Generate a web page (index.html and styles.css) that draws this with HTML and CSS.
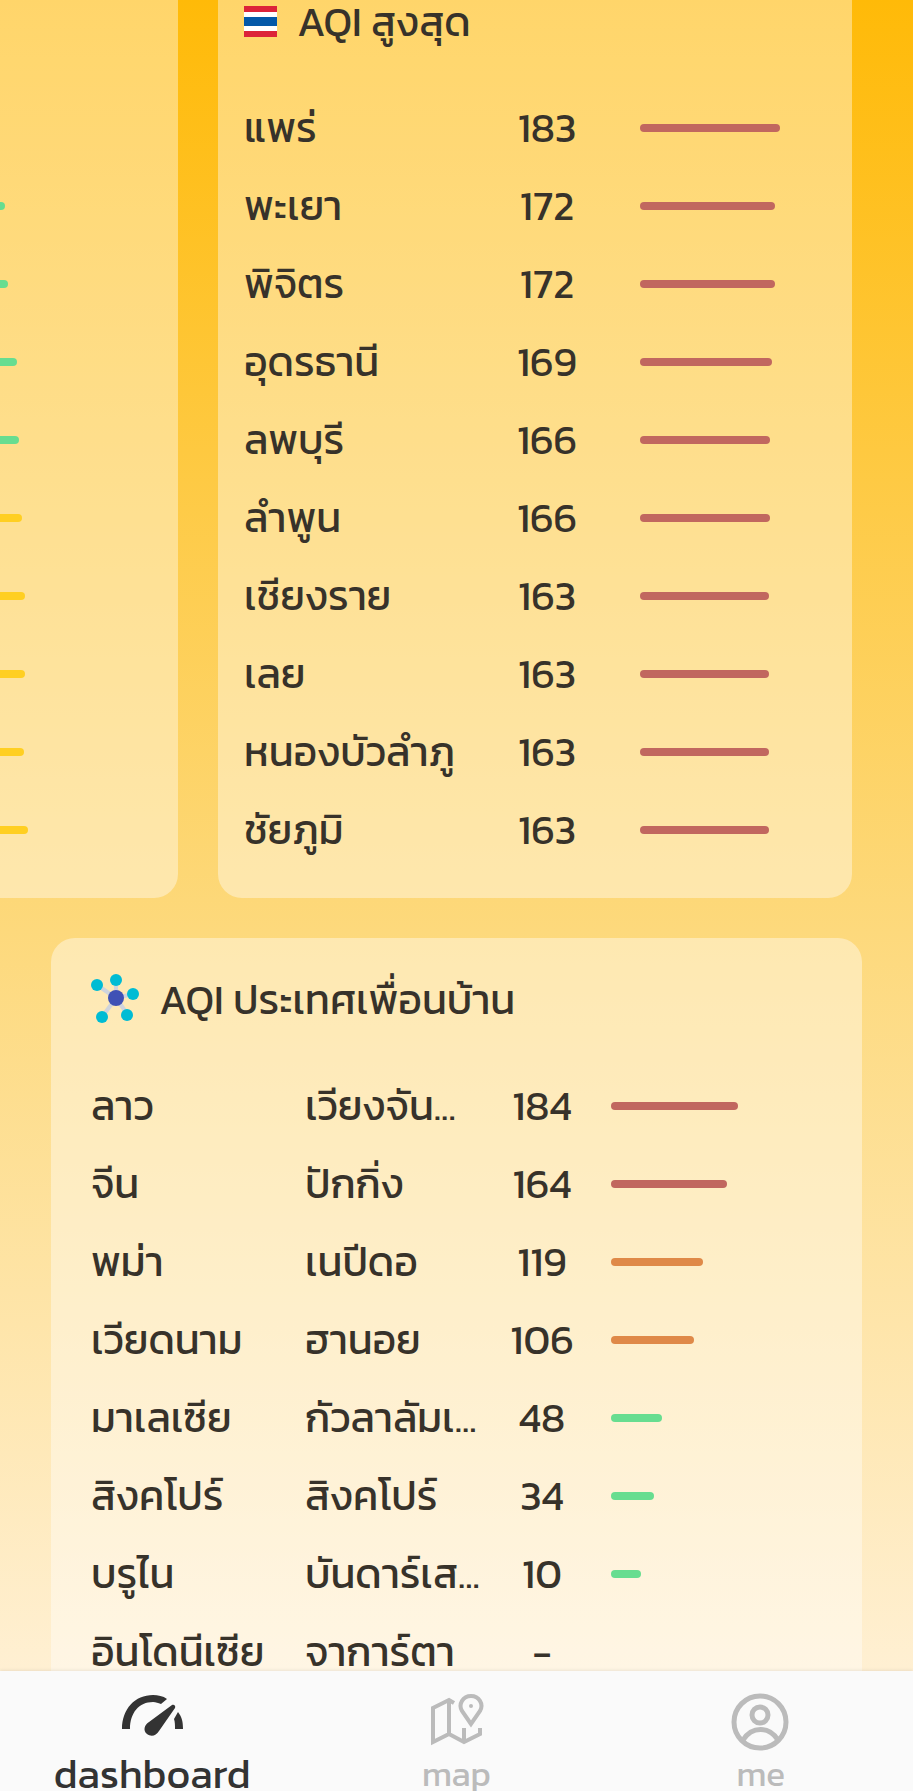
FILE: index.html
```
<!DOCTYPE html>
<html lang="th">
<head>
    <meta charset="UTF-8">
    <meta name="viewport" content="width=device-width, initial-scale=1.0">
    <title>AQI Dashboard</title>
    <link rel="stylesheet" href="styles.css">
</head>
<body>
    <main class="content">
        <div class="carousel">
            <section class="card">
                <ul class="bar-list">
                    <li><span class="bar green" style="width: 30px"></span></li>
                    <li><span class="bar green" style="width: 39px"></span></li>
                    <li><span class="bar green" style="width: 42px"></span></li>
                    <li><span class="bar green" style="width: 51px"></span></li>
                    <li><span class="bar green" style="width: 53px"></span></li>
                    <li><span class="bar yellow" style="width: 56px"></span></li>
                    <li><span class="bar yellow" style="width: 59px"></span></li>
                    <li><span class="bar yellow" style="width: 59px"></span></li>
                    <li><span class="bar yellow" style="width: 58px"></span></li>
                    <li><span class="bar yellow" style="width: 62px"></span></li>
                </ul>
            </section>

            <section class="card">
                <h2>
                    <svg class="flag" viewBox="0 0 33 31">
                        <rect width="33" height="31" fill="#fff"/>
                        <rect width="33" height="6" fill="#dc2339"/>
                        <rect y="11" width="33" height="9" fill="#0458a8"/>
                        <rect y="25" width="33" height="6" fill="#dc2339"/>
                    </svg>
                    AQI สูงสุด
                </h2>
                <table>
                    <tr><td class="province">แพร่</td><td class="aqi">183</td><td><span class="bar red" style="width: 140px"></span></td></tr>
                    <tr><td class="province">พะเยา</td><td class="aqi">172</td><td><span class="bar red" style="width: 135px"></span></td></tr>
                    <tr><td class="province">พิจิตร</td><td class="aqi">172</td><td><span class="bar red" style="width: 135px"></span></td></tr>
                    <tr><td class="province">อุดรธานี</td><td class="aqi">169</td><td><span class="bar red" style="width: 132px"></span></td></tr>
                    <tr><td class="province">ลพบุรี</td><td class="aqi">166</td><td><span class="bar red" style="width: 130px"></span></td></tr>
                    <tr><td class="province">ลำพูน</td><td class="aqi">166</td><td><span class="bar red" style="width: 130px"></span></td></tr>
                    <tr><td class="province">เชียงราย</td><td class="aqi">163</td><td><span class="bar red" style="width: 129px"></span></td></tr>
                    <tr><td class="province">เลย</td><td class="aqi">163</td><td><span class="bar red" style="width: 129px"></span></td></tr>
                    <tr><td class="province">หนองบัวลำภู</td><td class="aqi">163</td><td><span class="bar red" style="width: 129px"></span></td></tr>
                    <tr><td class="province">ชัยภูมิ</td><td class="aqi">163</td><td><span class="bar red" style="width: 129px"></span></td></tr>
                </table>
            </section>
        </div>

        <section class="card neighbors">
            <h2>
                <svg class="network" viewBox="0 1 48 50">
                    <path d="M25 25 6 12M25 25V7M25 25l17-4M25 25l12 17M25 25 11 44" stroke="#cfd4dc" stroke-width="4"/>
                    <circle cx="25" cy="25" r="8" fill="#3f51b5"/>
                    <g fill="#00bcd4">
                        <circle cx="6" cy="12" r="6"/>
                        <circle cx="25" cy="7" r="6"/>
                        <circle cx="42" cy="21" r="6"/>
                        <circle cx="36" cy="42" r="6"/>
                        <circle cx="11" cy="44" r="6"/>
                    </g>
                </svg>
                AQI ประเทศเพื่อนบ้าน
            </h2>
            <table>
                <tr><td class="country">ลาว</td><td class="city">เวียงจัน...</td><td class="aqi">184</td><td><span class="bar red" style="width: 127px"></span></td></tr>
                <tr><td class="country">จีน</td><td class="city">ปักกิ่ง</td><td class="aqi">164</td><td><span class="bar red" style="width: 116px"></span></td></tr>
                <tr><td class="country">พม่า</td><td class="city">เนปีดอ</td><td class="aqi">119</td><td><span class="bar orange" style="width: 92px"></span></td></tr>
                <tr><td class="country">เวียดนาม</td><td class="city">ฮานอย</td><td class="aqi">106</td><td><span class="bar orange" style="width: 83px"></span></td></tr>
                <tr><td class="country">มาเลเซีย</td><td class="city">กัวลาลัมเ...</td><td class="aqi">48</td><td><span class="bar green" style="width: 51px"></span></td></tr>
                <tr><td class="country">สิงคโปร์</td><td class="city">สิงคโปร์</td><td class="aqi">34</td><td><span class="bar green" style="width: 43px"></span></td></tr>
                <tr><td class="country">บรูไน</td><td class="city">บันดาร์เส...</td><td class="aqi">10</td><td><span class="bar green" style="width: 30px"></span></td></tr>
                <tr><td class="country">อินโดนีเซีย</td><td class="city">จาการ์ตา</td><td class="aqi">-</td><td></td></tr>
            </table>
        </section>
    </main>

    <nav class="bottom-nav">
        <a href="#dashboard" class="active">
            <svg viewBox="0 0 57 57">
                <path d="M-2 36C-2 16 11 2 29 2c5 0 10 1 14 4l-6 5c-3-1-5-2-8-2C15 9 6 20 6 36z"/>
                <path d="M51 15 35 38c-3 5-8 6-12 3s-3-9 2-12l23-17c2-1 4 1 3 3z"/>
                <path d="m54 19-4 7c1 3 1 6 1 10h8c0-7-1-12-5-17z"/>
            </svg>
            <span>dashboard</span>
        </a>
        <a href="#map">
            <svg viewBox="0 0 57 57" fill="none" stroke="currentColor" stroke-width="4">
                <path d="m26 10-5-3L5 15v34l16-8 15 8 16-8v-6M21 7v34M36 35v14"/>
                <path d="M43 31 34 18c-4-7 1-15 9-15s13 8 9 15z"/>
                <circle cx="43" cy="13" r="2" fill="currentColor" stroke="none"/>
            </svg>
            <span>map</span>
        </a>
        <a href="#me">
            <svg viewBox="0 0 57 57" fill="none" stroke="currentColor" stroke-width="5">
                <circle cx="28" cy="29" r="26"/>
                <circle cx="28" cy="22" r="8"/>
                <path d="M11 47c9-14 26-14 35 0"/>
            </svg>
            <span>me</span>
        </a>
    </nav>
</body>
</html>
```

FILE: styles.css
```
* {
    box-sizing: border-box;
}

body {
    font-family: Kanit, "Noto Sans", "Noto Sans Thai", sans-serif;
    font-size: 41px;
    color: #37322a;
    display: flex;
    flex-direction: column;
    height: 100vh;
    margin: 0;
    overflow: hidden;
    background: linear-gradient(#ffba08, #fdd97c 52%, #fff0d4 94%);
}

.content {
    flex: 1;
    min-height: 0;
    overflow: hidden;
}

.carousel {
    display: flex;
    justify-content: flex-end;
    gap: 40px;
    margin-top: -40px;
    padding-right: 61px;
}

.card {
    background-color: rgba(255,255,255,0.4);
    border-radius: 24px;
    padding: 29px 26px;
}

.carousel .card {
    flex: 0 0 634px;
}

.neighbors {
    margin: 40px 51px 0;
    padding: 29px 40px;
}

h2 {
    display: flex;
    align-items: center;
    height: 64px;
    margin: 0 0 36px;
    font-size: 41px;
    font-weight: 400;
    white-space: nowrap;
}

.flag {
    width: 33px;
    height: 31px;
    margin-right: 20px;
}

.network {
    width: 48px;
    height: 50px;
    margin-right: 20px;
}

table {
    width: 100%;
    table-layout: fixed;
    border-collapse: collapse;
}

td {
    height: 78px;
    padding: 0;
    line-height: 44px;
    white-space: nowrap;
}

.province {
    width: 258px;
}

.country {
    width: 214px;
}

.city {
    width: 192px;
}

.aqi {
    width: 90px;
    text-align: center;
}

.bar {
    display: block;
    height: 8px;
    margin-left: 24px;
    border-radius: 4px;
}

.carousel .bar {
    margin-left: 48px;
}

.red {
    background-color: #c1675f;
}

.orange {
    background-color: #df8948;
}

.yellow {
    background-color: #ffcf22;
}

.green {
    background-color: #67dd90;
}

.bar-list {
    list-style: none;
    margin: 100px 0 0;
    padding: 0 0 0 348px;
}

.bar-list li {
    display: flex;
    align-items: center;
    height: 78px;
}

.bottom-nav {
    display: flex;
    flex: none;
    height: 120px;
    overflow: hidden;
    background-color: #fafafa;
    box-shadow: 0 -1px 3px rgba(0,0,0,0.08);
}

.bottom-nav a {
    flex: 1;
    display: flex;
    flex-direction: column;
    align-items: center;
    padding-top: 22px;
    font-size: 35px;
    line-height: 44px;
    color: #bbb;
    text-decoration: none;
}

.bottom-nav .active {
    font-size: 41px;
    color: #333;
}

.bottom-nav svg {
    flex: none;
    width: 57px;
    height: 57px;
    margin-bottom: 2px;
    overflow: visible;
}

.active svg {
    fill: currentColor;
}
```
